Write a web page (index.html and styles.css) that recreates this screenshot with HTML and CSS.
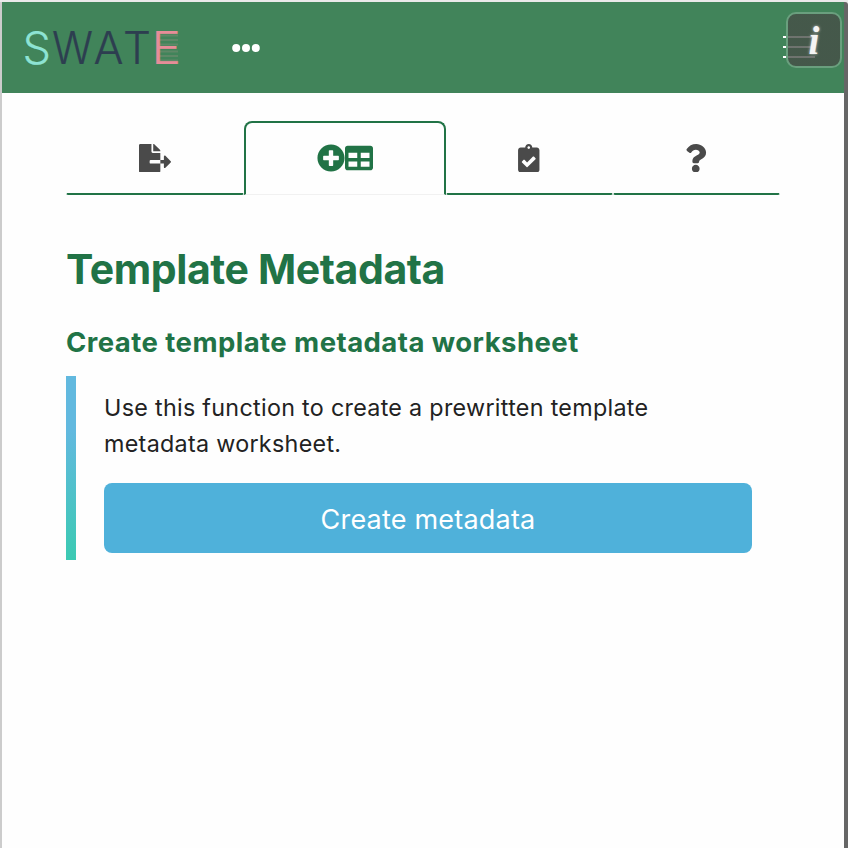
FILE: index.html
```
<!DOCTYPE html>
<html lang="en">
<head>
<meta charset="utf-8">
<title>Swate</title>
<link rel="stylesheet" href="styles.css">
</head>
<body>
<div class="window">
  <header class="navbar">
    <svg class="logo" viewBox="0 0 160 44" role="img" aria-label="SWATE">
      <g class="stripes">
        <path d="M135 9.500h19M135 14h19M135 18.500h19M135 25.500h19M135 30h19M135 34.500h19"/>
      </g>
      <text class="mint" x="-1.500" y="38" textLength="28.500" lengthAdjust="spacingAndGlyphs">S</text>
      <text class="navy" x="28" y="38" textLength="41" lengthAdjust="spacingAndGlyphs">W</text>
      <text class="navy" x="69.500" y="38" textLength="30" lengthAdjust="spacingAndGlyphs">A</text>
      <text class="navy" x="99" y="38" textLength="28" lengthAdjust="spacingAndGlyphs">T</text>
      <text class="rose" x="127.500" y="38" textLength="29.500" lengthAdjust="spacingAndGlyphs">E</text>
    </svg>
    <svg class="dots" viewBox="0 0 28 10"><circle cx="4.200" cy="5" r="4"/><circle cx="14" cy="5" r="4"/><circle cx="23.800" cy="5" r="4"/></svg>
    <div class="burger"><i></i><i></i><i></i></div>
    <button class="info" aria-label="Info"><span>i</span></button>
  </header>
  <main class="content">
    <nav class="tabs">
      <a class="tab"><svg class="icon-file" viewBox="0 0 576 512"><path d="M384 121.900c0-6.300-2.500-12.400-7-16.900L279.100 7c-4.500-4.500-10.600-7-17-7H256v128h128zM571 308l-95.700-96.400c-10.100-10.100-27.400-3-27.400 11.300V288h-64v64h64v65.200c0 14.300 17.300 21.400 27.400 11.300L571 332c6.600-6.600 6.600-17.400 0-24zm-379 28v-32c0-8.800 7.200-16 16-16h176V160H248c-13.200 0-24-10.800-24-24V0H24C10.700 0 0 10.700 0 24v464c0 13.300 10.700 24 24 24h336c13.300 0 24-10.700 24-24V352H208c-8.800 0-16-7.200-16-16z"/></svg></a>
      <a class="tab active"><svg class="icon-square" viewBox="0 0 512 512"><path d="M256 8C119 8 8 119 8 256s111 248 248 248 248-111 248-248S393 8 256 8zm144 276c0 6.600-5.400 12-12 12h-92v92c0 6.600-5.400 12-12 12h-56c-6.600 0-12-5.400-12-12v-92h-92c-6.600 0-12-5.400-12-12v-56c0-6.600 5.400-12 12-12h92v-92c0-6.600 5.400-12 12-12h56c6.600 0 12 5.400 12 12v92h92c6.600 0 12 5.400 12 12v56z"/></svg><svg class="icon-square" viewBox="0 0 512 512"><path d="M464 32H48C21.490 32 0 53.490 0 80v352c0 26.510 21.490 48 48 48h416c26.510 0 48-21.490 48-48V80c0-26.510-21.490-48-48-48zM224 416H64v-96h160v96zm0-160H64v-96h160v96zm224 160H288v-96h160v96zm0-160H288v-96h160v96z"/></svg></a>
      <a class="tab"><svg class="icon-narrow" viewBox="0 0 384 512"><path d="M336 64h-80c0-35.300-28.700-64-64-64s-64 28.700-64 64H48C21.500 64 0 85.500 0 112v352c0 26.500 21.500 48 48 48h288c26.500 0 48-21.500 48-48V112c0-26.500-21.500-48-48-48zM192 40c13.300 0 24 10.700 24 24s-10.700 24-24 24-24-10.700-24-24 10.700-24 24-24zm121.200 231.800l-143 141.800c-4.700 4.700-12.300 4.600-17-.1l-82.600-83.300c-4.700-4.700-4.600-12.300.1-17L99.100 285c4.700-4.700 12.300-4.600 17 .1l46 46.400 106-105.200c4.700-4.700 12.300-4.600 17 .1l28.200 28.400c4.700 4.800 4.600 12.300-.1 17z"/></svg></a>
      <a class="tab"><svg class="icon-narrow" viewBox="0 0 384 512"><path d="M202.021 0C122.202 0 70.503 32.703 29.914 91.026c-7.363 10.580-5.093 25.086 5.178 32.874l43.138 32.709c10.373 7.865 25.132 6.026 33.253-4.148 25.049-31.381 43.630-49.449 82.757-49.449 30.764 0 68.816 19.799 68.816 49.631 0 22.552-18.617 34.134-48.993 51.164-35.423 19.860-82.299 44.576-82.299 106.405V320c0 13.255 10.745 24 24 24h72.471c13.255 0 24-10.745 24-24v-5.773c0-42.860 125.268-44.645 125.268-160.627C377.504 66.256 286.902 0 202.021 0zM192 373.459c-38.196 0-69.271 31.075-69.271 69.271 0 38.195 31.075 69.270 69.271 69.270s69.271-31.075 69.271-69.271-31.075-69.270-69.271-69.270z"/></svg></a>
    </nav>
    <h1>Template Metadata</h1>
    <h2>Create template metadata worksheet</h2>
    <section class="box">
      <p>Use this function to create a prewritten template metadata worksheet.</p>
      <button class="primary">Create metadata</button>
    </section>
  </main>
</div>
</body>
</html>
```
FILE: styles.css
```
* { box-sizing: border-box; }
html, body { margin: 0; height: 848px; overflow: hidden; }
body {
  background: #eaeaea;
  font-family: Inter, "Liberation Sans", sans-serif;
  padding-top: 2px;
}
.window {
  height: 846px;
  background: #fefefe;
  border-left: 2px solid #ccc;
  border-right: 4px solid #666;
  border-top-right-radius: 3px;
}
.navbar {
  position: relative;
  height: 91px;
  background: #41845a;
  display: flex;
  align-items: center;
  padding-left: 22px;
}
.logo { width: 160px; height: 44px; overflow: visible; }
.logo text { font-size: 45px; font-weight: 300; font-family: Inter, sans-serif; stroke-width: .2; stroke-linejoin: round; }
.mint { fill: #8de3d3; stroke: #8de3d3; }
.navy { fill: #2d3e50; stroke: #2d3e50; }
.rose { fill: #e68d98; stroke: #e68d98; }
.stripes { stroke: #7c8c74; stroke-width: 2.2; opacity: .5; }
.dots { width: 28px; height: 10px; margin-left: 48px; fill: #fff; }
.burger {
  display: flex;
  flex-direction: column;
  gap: 8px;
  width: 32px;
  margin-left: auto;
  margin-right: 29px;
  margin-bottom: 1px;
}
.burger i { height: 2px; background: #fff; }
.info {
  position: absolute;
  top: 10px;
  right: 2px;
  width: 56px;
  height: 56px;
  padding: 0;
  border: 2px solid #6a9f7e;
  border-radius: 10px;
  background: rgba(70, 76, 70, .82);
  background: linear-gradient(rgba(70, 76, 70, .78), rgba(70, 76, 70, .78));
  color: #f4f4f4;
  font: italic bold 39px/54px "Liberation Serif", serif;
  text-shadow: 0 0 3px #ccc;
}
.content { padding: 28px 64px 0; }
.tabs { display: flex; width: 714px; height: 74px; }
.tab {
  width: 167px;
  display: flex;
  align-items: center;
  justify-content: center;
  border: 1px solid transparent;
  border-bottom: 2px solid #217346;
  border-radius: 4px 4px 2px 2px;
  padding: 1px 1px 0 0;
  fill: #4a4a4a;
}
.tab:first-child { width: 178px; }
.tab.active {
  width: 202px;
  border: 2px solid #217346;
  border-bottom: 1px solid #f1f1f1;
  border-radius: 8px 8px 0 0;
  padding: 0 1px 1px 0;
  fill: #217346;
}
.icon-file { width: 32px; height: 28.500px; }
.icon-square { width: 28px; height: 28px; }
.icon-narrow { width: 21.500px; height: 28.500px; }
h1, h2 { color: #217346; margin: 0; white-space: nowrap; }
h1 { font-size: 41px; line-height: 50px; font-weight: 700; margin-top: 49px; letter-spacing: -.4px; }
h2 { font-size: 27.500px; line-height: 36px; font-weight: 700; margin-top: 30px; letter-spacing: .45px; }
.box {
  margin-top: 16px;
  height: 184px;
  border-left: 10px solid;
  border-image: linear-gradient(#62b9df 30%, #3bcab2) 1;
  padding: 14px 28px 7px;
}
.box p { margin: 0; font-size: 23.300px; line-height: 36px; letter-spacing: .3px; color: #222; }
.primary {
  display: block;
  width: 100%;
  height: 70px;
  margin-top: 21px;
  padding: 2px 0 0;
  border: 0;
  border-radius: 8px;
  background: #4fb1da;
  color: #fff;
  font: 400 27px Inter, sans-serif;
  letter-spacing: .2px;
}
```
